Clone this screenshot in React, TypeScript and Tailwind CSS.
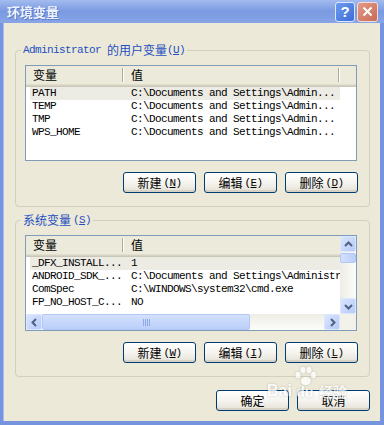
import React from "react";

const mono = "font-['Liberation_Mono',monospace] text-[11px] tracking-[-0.6px]";
const cjk = "font-['Noto_Sans_CJK_SC',sans-serif] text-[12px]";

const Hot = ({ k }: { k: string }) => (
  <span className={mono + " ml-[2px] leading-[14px]"}>
    (<span className="underline">{k}</span>)
  </span>
);

const Btn = ({ text, k }: { text: string; k?: string }) => (
  <button className="flex h-[21px] w-[73px] items-center justify-center rounded-[3px] border border-[#003C74] bg-linear-to-b from-white via-[#F5F4EF] to-[#E4E1D6] text-black shadow-[inset_0_-2px_0_#D8D2C6]">
    <span className={cjk + " leading-[14px]"}>{text}</span>
    {k && <Hot k={k} />}
  </button>
);

const Divider = () => (
  <span className="h-[14px] w-[2px] border-l border-r border-l-[#ACA899] border-r-white" />
);

const Header = ({ second }: { second?: boolean }) => (
  <div className="flex h-[21px] shrink-0 bg-[#EBEADB] pb-[3px] text-black shadow-[inset_0_-1px_0_#CBC7B8,inset_0_-2px_0_#D6D2C2,inset_0_-3px_0_#E2DECD]">
    <div className="flex w-[98px] shrink-0 items-center justify-between pl-[7px]">
      <span className={cjk + " leading-[14px]"}>变量</span>
      <Divider />
    </div>
    <div className="flex w-[216px] shrink-0 items-center justify-between pl-[7px]">
      <span className={cjk + " leading-[14px]"}>值</span>
      {second && <Divider />}
    </div>
  </div>
);

const Row = ({ a, b, sel }: { a: string; b: string; sel?: boolean }) => (
  <div className="flex h-[13px] shrink-0">
    <div className={"ml-[4px] flex h-[13px] w-[310px] shrink-0 items-center text-black " + (sel ? "bg-[#ECEBE4]" : "")}>
      <span className={mono + " w-[99px] shrink-0 whitespace-nowrap pl-[2px] leading-[13px]"}>{a}</span>
      <span className={mono + " whitespace-nowrap pl-[2px] leading-[13px]"}>{b}</span>
    </div>
  </div>
);

const arrows: Record<string, string> = {
  up: "M1 6 L4.5 2.5 L8 6",
  down: "M1 3 L4.5 6.5 L8 3",
  left: "M6 1 L2.5 4.5 L6 8",
  right: "M3 1 L6.5 4.5 L3 8",
};

const Arrow = ({ dir }: { dir: string }) => (
  <div className="flex h-[16px] w-[16px] shrink-0 items-center justify-center rounded-[2px] border border-[#DCE6FD] bg-linear-to-br from-[#DAE5FE] to-[#B7CBF8]">
    <svg width="9" height="9" viewBox="0 0 9 9">
      <path d={arrows[dir]} stroke="#4D6185" strokeWidth="2" fill="none" />
    </svg>
  </div>
);

const GripH = () => (
  <div className="flex gap-[1px]">
    {[0, 1, 2, 3].map((i) => (
      <span key={i} className="h-[7px] w-[1px] bg-[#8CA9EE]" />
    ))}
  </div>
);

const Legend = ({ children }: { children: React.ReactNode }) => (
  <legend className="flex h-[14px] items-center px-[2px] text-[#1F4FC2]">{children}</legend>
);

// faint site watermark over the lower right corner
const Watermark = () => (
  <div className="pointer-events-none absolute left-[264px] top-[343px] flex items-end text-white opacity-75 drop-shadow-[0_0_1px_rgba(90,90,90,0.4)]">
    <span className="font-['Liberation_Sans',sans-serif] text-[16px] font-bold leading-[18px]">Bai</span>
    <div className="mx-[1px] flex flex-col items-center">
      <svg width="24" height="20" viewBox="0 0 24 20" className="mb-[-2px]">
        <ellipse cx="5" cy="9" rx="2.6" ry="3.2" fill="white" />
        <ellipse cx="10" cy="4" rx="2.6" ry="3.2" fill="white" />
        <ellipse cx="16" cy="4" rx="2.6" ry="3.2" fill="white" />
        <ellipse cx="20.5" cy="9" rx="2.6" ry="3.2" fill="white" />
        <ellipse cx="12.8" cy="15" rx="5" ry="4.2" fill="white" />
      </svg>
      <span className="font-['Liberation_Sans',sans-serif] text-[14px] font-bold leading-[16px]">du</span>
    </div>
    <span className="ml-[1px] font-['Noto_Sans_CJK_SC',sans-serif] text-[14px] font-bold leading-[17px]">经验</span>
  </div>
);

export default function App() {
  return (
    <div className="flex h-[425px] w-[384px] flex-col bg-[#7693DE]">
      {/* title bar */}
      <div className="flex h-[23px] shrink-0 items-center justify-between bg-linear-to-b from-[#A3BBEE] via-[#7A99E1] to-[#88A5E7] pl-[7px] pr-[6px]">
        <span className="font-['Noto_Sans_CJK_SC',sans-serif] text-[13px] font-bold leading-[16px] text-[#EEF2FC] drop-shadow-[1px_1px_0_rgba(60,90,170,0.5)]">
          环境变量
        </span>
        <div className="flex gap-[2px]">
          <div className="flex h-[20px] w-[20px] items-center justify-center rounded-[3px] border border-[#DDE6FA] bg-linear-to-br from-[#6E9BF0] to-[#3D6DD6] font-['Liberation_Sans',sans-serif] text-[15px] font-bold leading-none text-white">
            ?
          </div>
          <div className="flex h-[20px] w-[21px] items-center justify-center rounded-[3px] border border-[#F2DCD6] bg-linear-to-br from-[#E39A88] to-[#C96A55]">
            <svg width="11" height="11" viewBox="0 0 11 11">
              <path d="M1.5 1.5 L9.5 9.5 M9.5 1.5 L1.5 9.5" stroke="white" strokeWidth="2" />
            </svg>
          </div>
        </div>
      </div>

      {/* body */}
      <div className="relative mb-[4px] ml-[3px] mr-[4px] flex flex-1 flex-col bg-[#ECE9D8] pt-[20px] shadow-[inset_1px_0_0_#A9BCEB]">
        <fieldset className="ml-[12px] w-[355px] rounded-[4px] border border-[#D0D0BF] pb-[13px] pl-[5px] pr-[11px]">
          <Legend>
            <span className={mono + " leading-[14px]"}>Administrator&nbsp;</span>
            <span className={cjk + " leading-[14px]"}>的用户变量</span>
            <span className={mono + " leading-[14px]"}>
              (<span className="underline">U</span>)
            </span>
          </Legend>
          <div className="ml-[4px] mt-[8px] flex h-[96px] w-[332px] flex-col overflow-hidden border border-[#7F9DB9] bg-white">
            <div className="flex">
              <Header second />
              <div className="h-[21px] flex-1 bg-[#EBEADB] shadow-[inset_0_-1px_0_#CBC7B8,inset_0_-2px_0_#D6D2C2,inset_0_-3px_0_#E2DECD]" />
            </div>
            <Row a="PATH" b="C:\Documents and Settings\Admin..." sel />
            <Row a="TEMP" b="C:\Documents and Settings\Admin..." />
            <Row a="TMP" b="C:\Documents and Settings\Admin..." />
            <Row a="WPS_HOME" b="C:\Documents and Settings\Admin..." />
          </div>
          <div className="mt-[11px] flex justify-end gap-[8px]">
            <Btn text="新建" k="N" />
            <Btn text="编辑" k="E" />
            <Btn text="删除" k="D" />
          </div>
        </fieldset>

        <fieldset className="ml-[12px] mt-[6px] w-[355px] rounded-[4px] border border-[#D0D0BF] pb-[13px] pl-[5px] pr-[11px]">
          <Legend>
            <span className={cjk + " leading-[14px]"}>系统变量</span>
            <Hot k="S" />
          </Legend>
          <div className="ml-[4px] mt-[8px] flex h-[96px] w-[332px] overflow-hidden border border-[#7F9DB9] bg-white">
            <div className="flex w-[314px] shrink-0 flex-col overflow-hidden">
              <Header />
              <Row a="_DFX_INSTALL..." b="1" sel />
              <Row a="ANDROID_SDK_..." b="C:\Documents and Settings\Administrator" />
              <Row a="ComSpec" b="C:\WINDOWS\system32\cmd.exe" />
              <Row a="FP_NO_HOST_C..." b="NO" />
              <div className="flex-1" />
              <div className="flex h-[16px] shrink-0 bg-linear-to-b from-[#EEEDE5] to-[#FCFCFA]">
                <Arrow dir="left" />
                <div className="flex w-[208px] items-center justify-center rounded-[2px] border border-[#B3C7F5] bg-linear-to-b from-[#D4E1FD] to-[#BACEF9]">
                  <GripH />
                </div>
                <div className="flex-1" />
                <Arrow dir="right" />
              </div>
            </div>
            <div className="flex w-[16px] shrink-0 flex-col">
              <div className="flex flex-1 flex-col bg-linear-to-r from-[#EEEDE5] to-[#FCFCFA]">
                <Arrow dir="up" />
                <div className="mt-[1px] h-[10px] rounded-[2px] border border-[#B3C7F5] bg-linear-to-r from-[#D4E1FD] to-[#BACEF9]" />
                <div className="flex-1" />
                <Arrow dir="down" />
              </div>
              <div className="h-[16px] bg-[#F2F1EA]" />
            </div>
          </div>
          <div className="mt-[11px] flex justify-end gap-[8px]">
            <Btn text="新建" k="W" />
            <Btn text="编辑" k="I" />
            <Btn text="删除" k="L" />
          </div>
        </fieldset>

        <div className="mt-[13px] flex justify-end gap-[8px] pr-[10px]">
          <Btn text="确定" />
          <Btn text="取消" />
        </div>

        <Watermark />
      </div>
    </div>
  );
}
